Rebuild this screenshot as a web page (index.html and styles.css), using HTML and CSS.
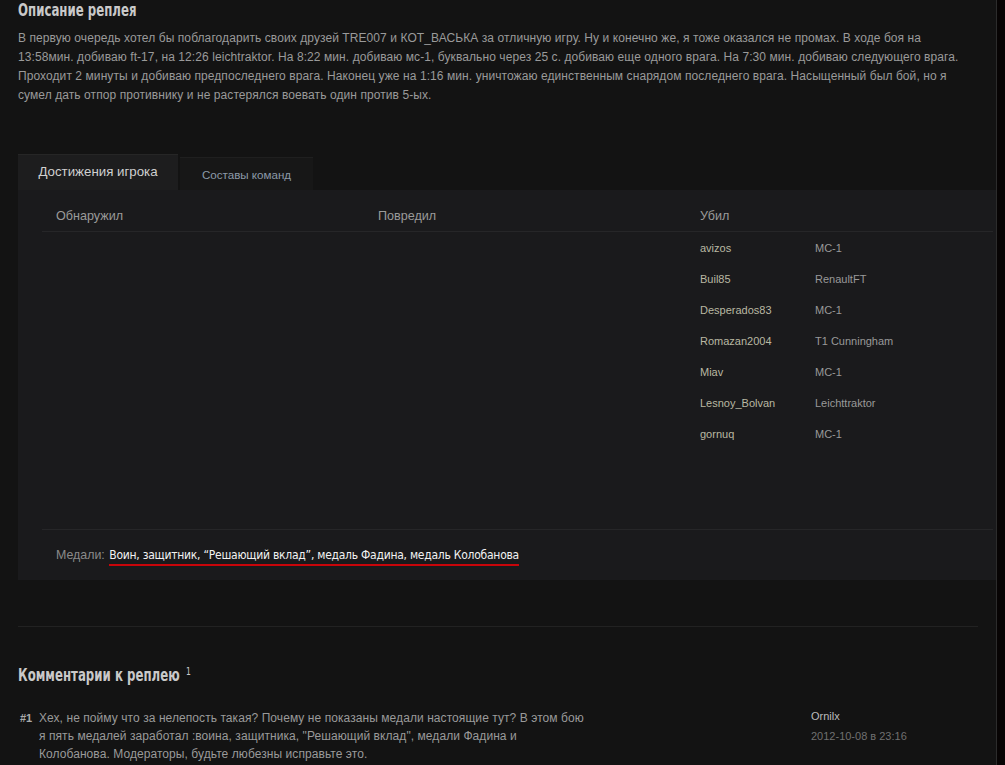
FILE: index.html
```html
<!DOCTYPE html>
<html lang="ru">

<head>
    <meta charset="UTF-8">
    <meta name="viewport" content="width=device-width, initial-scale=1.0">
    <link rel="stylesheet" href="styles.css">
    <title>Описание реплея</title>
</head>

<body>

    <div class="page">

        <h2 class="title">Описание реплея</h2>
        <p class="description">
            В первую очередь хотел бы поблагодарить своих друзей TRE007 и КОТ_ВАСЬКА за отличную игру. Ну и конечно же, я тоже оказался не промах. В ходе боя на 13:58мин. добиваю ft-17, на 12:26 leichtraktor. На 8:22 мин. добиваю мс-1, буквально через 25 с. добиваю еще одного врага. На 7:30 мин. добиваю следующего врага. Проходит 2 минуты и добиваю предпоследнего врага. Наконец уже на 1:16 мин. уничтожаю единственным снарядом последнего врага. Насыщенный был бой, но я сумел дать отпор противнику и не растерялся воевать один против 5-ых.
        </p>

        <div class="tabs">
            <a href="#" class="tab active">Достижения игрока</a>
            <a href="#" class="tab">Составы команд</a>
        </div>

        <div class="tab-panel">
            <div class="stats">
                <div class="stats-col">
                    <h4>Обнаружил</h4>
                </div>
                <div class="stats-col">
                    <h4>Повредил</h4>
                </div>
                <div class="stats-col">
                    <h4>Убил</h4>
                    <ul class="kills">
                        <li><span class="player">avizos</span><span class="tank">MC-1</span></li>
                        <li><span class="player">Buil85</span><span class="tank">RenaultFT</span></li>
                        <li><span class="player">Desperados83</span><span class="tank">MC-1</span></li>
                        <li><span class="player">Romazan2004</span><span class="tank">T1 Cunningham</span></li>
                        <li><span class="player">Miav</span><span class="tank">MC-1</span></li>
                        <li><span class="player">Lesnoy_Bolvan</span><span class="tank">Leichttraktor</span></li>
                        <li><span class="player">gornuq</span><span class="tank">MC-1</span></li>
                    </ul>
                </div>
            </div>
            <div class="medals">
                <span class="medals-label">Медали:</span>
                <span class="medals-list">Воин, защитник, “Решающий вклад”, медаль Фадина, медаль Колобанова</span>
            </div>
        </div>

        <hr class="divider">

        <h2 class="title comments-title">Комментарии к реплею <sup>1</sup></h2>

        <div class="comment">
            <span class="comment-num">#1</span>
            <p class="comment-text">Хех, не пойму что за нелепость такая? Почему не показаны медали настоящие тут? В этом бою я пять медалей заработал :воина, защитника, "Решающий вклад", медали Фадина и Колобанова. Модераторы, будьте любезны исправьте это.</p>
            <div class="comment-meta">
                <a href="#" class="comment-author">Ornilx</a>
                <span class="comment-date">2012-10-08 в 23:16</span>
            </div>
        </div>

    </div>

</body>

</html>
```

FILE: styles.css
```css
body {
    font-family: 'Liberation Sans', Arial, sans-serif;
    margin: 0;
    padding: 0;
    background-color: #070404;
    color: #999;
    overflow: hidden;
}

.page {
    width: 978px;
    min-height: 765px;
    padding-left: 18px;
    background-color: #131313;
    border-right: 1px solid #2c2c2c;
    box-sizing: content-box;
}

/* condensed bold heading, no narrow font installed so squeeze it */
.title {
    margin: 0;
    font-family: 'DejaVu Sans Condensed', 'Liberation Sans', sans-serif;
    font-size: 17px;
    font-weight: bold;
    line-height: 20px;
    color: #c9c9c9;
    transform: scaleX(0.77);
    transform-origin: left center;
}

.title sup {
    font-size: 11px;
    vertical-align: 6px;
    font-weight: normal;
    margin-left: 3px;
}

.description {
    margin: 9px 0 0;
    width: 948px;
    font-size: 12px;
    line-height: 19px;
    letter-spacing: 0.08px;
    color: #9a9a9a;
}

.tabs {
    display: flex;
    align-items: flex-end;
    gap: 2px;
    margin-top: 49px;
    height: 36px;
}

.tab {
    text-decoration: none;
    display: block;
    box-sizing: border-box;
}

.tab.active {
    width: 160px;
    height: 36px;
    padding-top: 9px;
    text-align: center;
    font-size: 13.3px;
    color: #d0d0d0;
    background-color: #1d1d1e;
    border-top: 1px solid #262626;
}

.tab:not(.active) {
    width: 133px;
    height: 33px;
    padding-top: 10px;
    text-align: center;
    font-size: 11.6px;
    color: #8c9aa8;
    background-color: #171717;
    border-top: 1px solid #1f1f1f;
}

.tab-panel {
    background-color: #1a1a1c;
    height: 390px;
    padding: 0 3px 0 24px;
    box-sizing: border-box;
}

.stats {
    display: flex;
    height: 339px;
    border-bottom: 1px solid #262628;
}

.stats-col {
    width: 322px;
    flex: none;
}

.stats-col:last-child {
    flex: 1;
}

.stats-col h4 {
    margin: 0;
    padding: 18px 0 7px 14px;
    font-size: 12.6px;
    font-weight: normal;
    line-height: 16px;
    color: #9a9a9a;
    border-bottom: 1px solid #262628;
}

.kills {
    list-style: none;
    margin: 0;
    padding: 0 0 0 14px;
}

.kills li {
    display: flex;
    height: 31px;
    align-items: center;
    font-size: 11px;
}

.player {
    width: 115px;
    color: #b9b8a2;
}

.tank {
    color: #999;
}

.medals {
    padding: 15px 14px;
    line-height: 18px;
}

.medals-label {
    font-size: 12.4px;
    color: #8a8a8a;
}

.medals-list {
    font-family: 'DejaVu Sans Condensed', 'Liberation Sans', sans-serif;
    font-size: 12px;
    letter-spacing: -0.25px;
    color: #f2f2f2;
    border-bottom: 2px solid #c8050a;
    padding-bottom: 2px;
}

.divider {
    margin: 46px 0 0;
    border: none;
    border-top: 1px solid #222;
    width: 960px;
}

.comments-title {
    margin-top: 35px;
}

.comment {
    display: flex;
    margin-top: 24px;
    font-size: 12px;
    line-height: 18px;
}

.comment-num {
    width: 19px;
    padding-left: 2px;
    flex: none;
    font-weight: bold;
    font-size: 11px;
    color: #aaa;
}

.comment-text {
    margin: 0;
    width: 550px;
    flex: none;
    letter-spacing: 0.07px;
    color: #9a9a9a;
}

.comment-meta {
    margin-left: 222px;
    display: flex;
    flex-direction: column;
    gap: 2px;
    margin-top: -2px;
}

.comment-author {
    color: #bcbcbc;
    text-decoration: none;
    font-size: 11px;
}

.comment-date {
    color: #707070;
    font-size: 11px;
}
```
